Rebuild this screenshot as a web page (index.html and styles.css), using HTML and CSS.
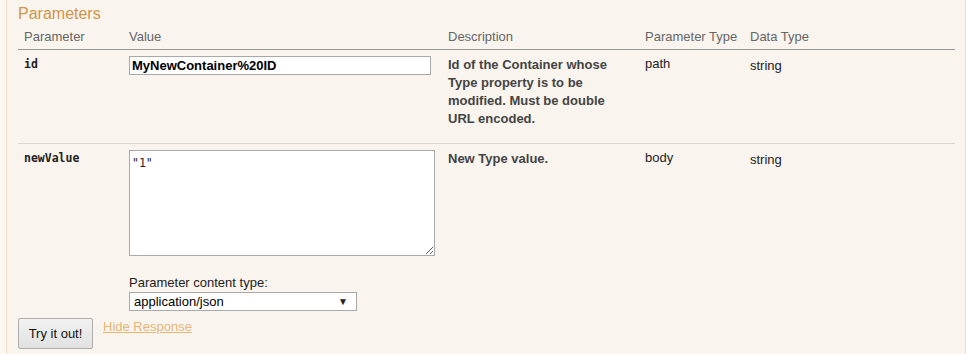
FILE: index.html
```html
<!DOCTYPE html>
<html>
<head>
<meta charset="utf-8">
<link rel="stylesheet" href="styles.css">
</head>
<body>
<div class="page">
  <div class="content">
    <h4 class="title">Parameters</h4>
    <table class="params">
      <colgroup>
        <col class="c1"><col class="c2"><col class="c3"><col class="c4"><col class="c5">
      </colgroup>
      <thead>
        <tr>
          <th>Parameter</th>
          <th>Value</th>
          <th>Description</th>
          <th>Parameter Type</th>
          <th>Data Type</th>
        </tr>
      </thead>
      <tbody>
        <tr class="row1">
          <td class="code">id</td>
          <td><input class="text-in" type="text" value="MyNewContainer%20ID"></td>
          <td class="desc">Id of the Container whose Type property is to be modified. Must be double URL encoded.</td>
          <td class="ptype">path</td>
          <td class="dtype">string</td>
        </tr>
        <tr class="row2">
          <td class="code">newValue</td>
          <td>
            <textarea class="body-in">"1"</textarea>
            <div class="ctype">
              <label class="ctype-label">Parameter content type:</label>
              <div class="select">
                <span>application/json</span>
                <span class="arrow">&#9660;</span>
              </div>
            </div>
          </td>
          <td class="desc">New Type value.</td>
          <td class="ptype">body</td>
          <td class="dtype">string</td>
        </tr>
      </tbody>
    </table>
    <div class="actions">
      <button class="try">Try it out!</button>
      <a class="hide" href="#">Hide Response</a>
    </div>
  </div>
</div>
</body>
</html>
```

FILE: styles.css
```css
html, body {
  margin: 0;
  padding: 0;
  background: #ffffff;
}
body {
  font-family: "Liberation Sans", Arial, sans-serif;
  font-size: 13px;
  color: #333;
}
.page {
  width: 966px;
  height: 354px;
  background: #fbf8f3;
  padding-left: 6px;
  box-sizing: border-box;
}
.content {
  height: 354px;
  background: #f9f4ee;
  border-left: 1px solid #f0e0ca;
  border-right: 1px solid #f0e0ca;
  box-sizing: border-box;
  padding-left: 11px;
  overflow: hidden;
}
.title {
  margin: 0;
  padding-top: 5px;
  font-size: 16px;
  line-height: 18px;
  font-weight: normal;
  color: #cf9447;
}
.params {
  border-collapse: collapse;
  table-layout: fixed;
  width: 937px;
  margin-top: 2px;
}
.c1 { width: 105px; }
.c2 { width: 319px; }
.c3 { width: 197px; }
.c4 { width: 105px; }
.c5 { width: 211px; }
.params th {
  text-align: left;
  font-weight: normal;
  color: #666;
  font-size: 13px;
  line-height: 16px;
  padding: 4px 6px 4px;
  border-bottom: 1px solid #999;
}
.params td {
  vertical-align: top;
  padding: 6px 6px 0;
  line-height: 18px;
  color: #222;
}
.row1 td {
  height: 85px;
  border-bottom: 1px solid #d9d5cf;
}
.row2 td {
  padding-top: 6px;
  height: 165px;
}
.params td.code {
  font-family: "DejaVu Sans Mono", monospace;
  font-size: 11.5px;
  font-weight: bold;
  color: #222;
  line-height: 16px;
}
.params td.desc {
  font-weight: bold;
  color: #444;
  padding-right: 10px;
}
.params td.ptype {
  line-height: 16px;
}
.params td.dtype {
  padding-top: 8px;
  line-height: 16px;
}
.text-in {
  display: block;
  box-sizing: border-box;
  width: 302px;
  height: 19px;
  margin: 0;
  padding: 0 2px;
  border: 1px solid #a9a9a9;
  background: #fff;
  font-family: "Liberation Sans", Arial, sans-serif;
  font-size: 13px;
  font-weight: bold;
  color: #000;
}
.body-in {
  display: block;
  box-sizing: border-box;
  width: 306px;
  height: 106px;
  margin: 0;
  padding: 5px 2px;
  border: 1px solid #a9a9a9;
  background: #fff;
  font-family: "DejaVu Sans Mono", monospace;
  font-size: 11.5px;
  line-height: 14px;
  color: #222;
  resize: both;
}
.ctype {
  margin-top: 18px;
}
.ctype-label {
  display: block;
  font-size: 13px;
  line-height: 18px;
  color: #222;
}
.select {
  box-sizing: border-box;
  width: 228px;
  height: 19px;
  border: 1px solid #a9a9a9;
  background: #fff;
  display: flex;
  align-items: center;
  justify-content: space-between;
  padding: 0 8px 0 4px;
  font-size: 13px;
  color: #000;
}
.select .arrow {
  font-size: 10px;
  color: #222;
}
.actions {
  display: flex;
  align-items: flex-start;
  gap: 10px;
  margin-top: 1px;
}
.try {
  box-sizing: border-box;
  width: 75px;
  height: 31px;
  margin: 0;
  padding: 0;
  border: 1px solid #adadad;
  border-radius: 2px;
  background: linear-gradient(#f2f2f2, #e1e1e1);
  font-family: "Liberation Sans", Arial, sans-serif;
  font-size: 13px;
  color: #111;
}
.hide {
  font-size: 13px;
  line-height: 16px;
  margin-top: 1px;
  color: #e6b676;
  text-decoration: underline;
}
```
